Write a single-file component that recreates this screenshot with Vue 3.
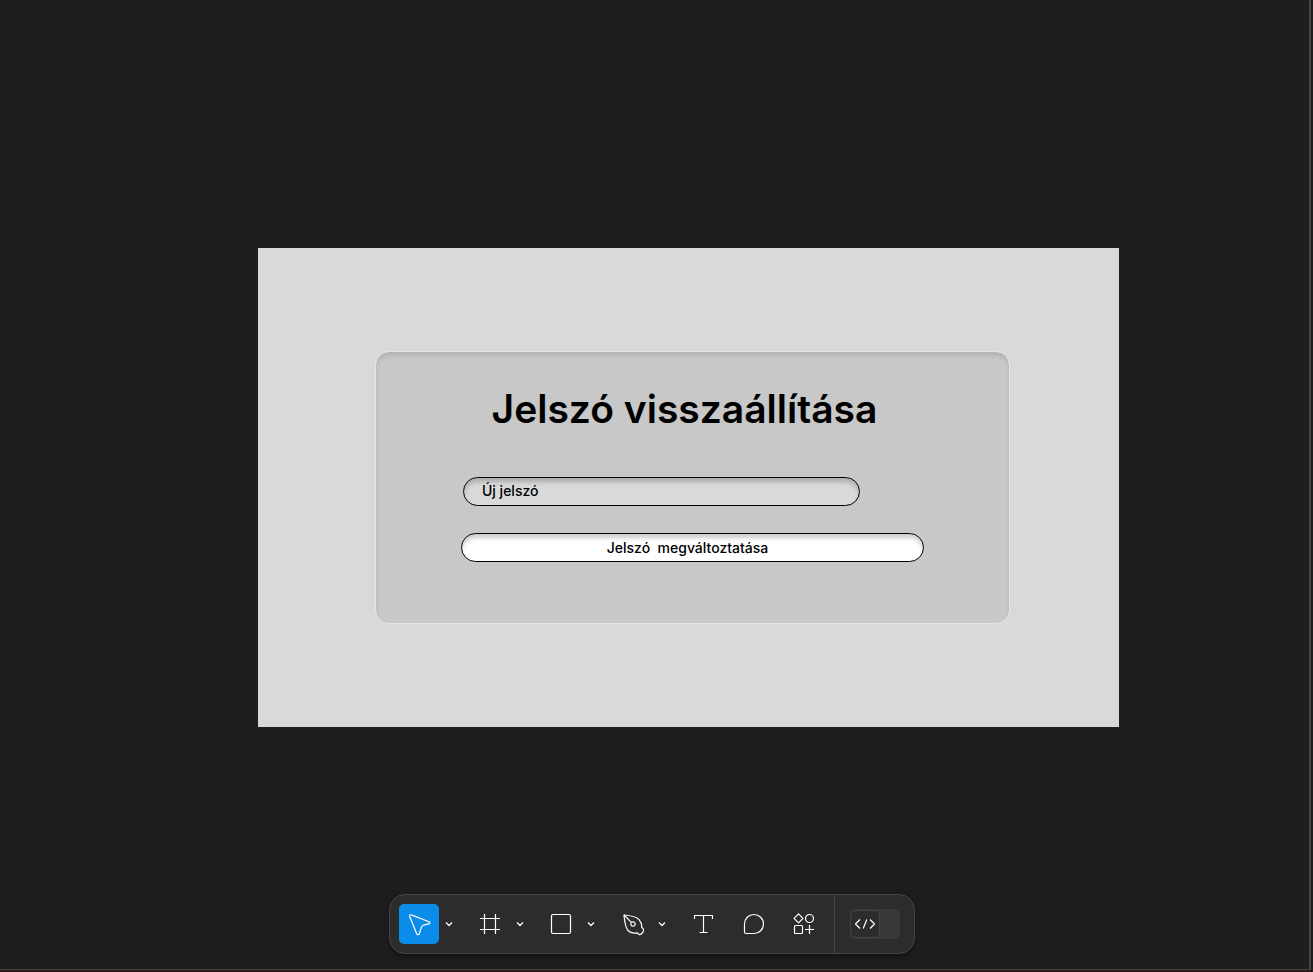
<script setup>
import { ref } from 'vue'

const password = ref('')
const devMode = ref(false)
const active = ref('move')

const tools = [
  {
    id: 'move',
    label: 'Move',
    menu: true,
    paths: ['M2.7 4.5C2.3 3.3 3.2 2.4 4.4 2.9L21.9 9.7C23.2 10.3 23 11.5 21.8 11.8L16.5 13.2C15.5 13.5 14.8 14.1 14.4 15.1L12.3 21.8C11.9 22.9 10.2 22.9 9.7 21.8Z'],
  },
  { id: 'frame', label: 'Frame', menu: true, paths: ['M6.5 2V22M17.5 2V22M2 6.5H22M2 17.5H22'] },
  {
    id: 'shape',
    label: 'Rectangle',
    menu: true,
    paths: ['M4 2.5H20Q21.5 2.5 21.5 4V20Q21.5 21.5 20 21.5H4Q2.5 21.5 2.5 20V4Q2.5 2.5 4 2.5Z'],
  },
  {
    id: 'pen',
    label: 'Pen',
    menu: true,
    paths: [
      'M4 3C9.5 3.4 16.4 4.6 19 7.6C21.2 10.2 22.1 12.8 21.7 15.4L23.7 17.3C23.7 19.9 21.8 22.4 19.4 22.7L17 20.8C13.5 21.4 10 20.8 8 18.5C5 15 4.5 9 4 3Z',
      'M4 3L11.4 10.4',
      'M15.2 12A2.2 2.2 0 1 1 10.8 12A2.2 2.2 0 1 1 15.2 12Z',
    ],
  },
  { id: 'text', label: 'Text', paths: ['M3.5 7V3.5H21.5V7M12.5 3.5V20.5M8.5 20.5H16.5'] },
  { id: 'comment', label: 'Comment', paths: ['M12 2.5A9.5 9.5 0 1 1 12 21.5H4Q2.5 21.5 2.5 20V12A9.5 9.5 0 0 1 12 2.5Z'] },
  {
    id: 'actions',
    label: 'Actions',
    paths: [
      'M5.5 1.8L10 6.3L5.5 10.8L1 6.3Z',
      'M20.5 6.5A4 4 0 1 1 12.5 6.5A4 4 0 1 1 20.5 6.5Z',
      'M2.5 13.5H8.5Q9.5 13.5 9.5 14.5V20.5Q9.5 21.5 8.5 21.5H2.5Q1.5 21.5 1.5 20.5V14.5Q1.5 13.5 2.5 13.5Z',
      'M16.5 13V22M12 17.5H21',
    ],
  },
]
</script>

<template>
  <div class="editor">
    <main class="canvas">
      <section class="frame">
        <form class="card" @submit.prevent>
          <h1>Jelszó visszaállítása</h1>
          <input v-model="password" class="field" type="password" placeholder="Új jelszó" aria-label="Új jelszó" />
          <button class="submit" type="submit">Jelszó&nbsp; megváltoztatása</button>
        </form>
      </section>
    </main>
    <nav class="toolbar" aria-label="Tools">
      <div v-for="tool in tools" :key="tool.id" class="group">
        <button
          type="button"
          class="tool"
          :class="{ active: active === tool.id }"
          :aria-label="tool.label"
          @click="active = tool.id"
        >
          <svg viewBox="0 0 24 24" class="icon"><path v-for="d in tool.paths" :key="d" :d="d" /></svg>
        </button>
        <button v-if="tool.menu" type="button" class="more" :aria-label="tool.label + ' options'">
          <svg viewBox="0 0 8 8" class="chevron"><path d="M1 2.5L4 5.5L7 2.5" /></svg>
        </button>
      </div>
      <label class="mode">
        <input v-model="devMode" type="checkbox" aria-label="Dev Mode" />
        <span class="thumb">
          <svg viewBox="0 0 24 24" class="icon"><path d="M7 7.5L2.5 12L7 16.5M17 7.5L21.5 12L17 16.5M13.8 7.5L10.2 16.5" /></svg>
        </span>
      </label>
    </nav>
  </div>
</template>

<style>
body {
  margin: 0;
  background: #1e1e1e;
}
</style>

<style scoped>
.editor {
  position: relative;
  box-sizing: border-box;
  min-height: 100vh;
  display: flex;
  background: #1e1e1e;
  border-bottom: 2px solid #2c1a1c;
  font-family: Inter, "Open Sans", sans-serif;
}
.canvas {
  flex: 1;
  box-sizing: border-box;
  display: flex;
  align-items: center;
  justify-content: center;
  padding: 6px 0 0 68px;
  border-right: 2px solid #444;
  border-bottom: 1px solid #444;
  margin-right: 2px;
}
.frame {
  box-sizing: border-box;
  width: 861px;
  max-width: 100%;
  padding: 103px 109px 103px 117px;
  background: #d9d9d9;
}
.card {
  display: flex;
  flex-direction: column;
  align-items: flex-start;
  box-sizing: border-box;
  padding: 32px 85px 61px;
  background: #c8c8c8;
  border: 1px solid #e6e6e6;
  border-radius: 14px;
  box-shadow: inset 0 4px 4px rgba(0, 0, 0, 0.1);
}
h1 {
  align-self: stretch;
  margin: 0 16px 43px 0;
  font-size: 39px;
  line-height: 50px;
  font-weight: 600;
  color: #000;
  text-align: center;
  white-space: nowrap;
}
.field,
.submit {
  box-sizing: border-box;
  height: 29px;
  border: 1px solid #000;
  border-radius: 15px;
  font-family: inherit;
  font-size: 14px;
  line-height: 20px;
  font-weight: 500;
  color: #000;
  box-shadow: inset 0 4px 4px rgba(0, 0, 0, 0.2);
}
.field {
  width: 397px;
  max-width: 100%;
  margin: 0 0 27px 2px;
  padding: 0 18px 2px;
  background: #d9d9d9;
}
.field::placeholder {
  color: #000;
  opacity: 1;
}
.submit {
  width: 463px;
  max-width: 100%;
  padding: 0 10px 0 0;
  background: #fff;
}
.toolbar {
  position: absolute;
  left: 0;
  right: 9px;
  bottom: 16px;
  width: fit-content;
  margin: 0 auto;
  display: flex;
  gap: 11px;
  box-sizing: border-box;
  height: 60px;
  padding-left: 9px;
  background: #2c2c2c;
  border: 1px solid #444;
  border-radius: 16px;
  box-shadow: 0 3px 8px rgba(0, 0, 0, 0.35);
}
.group {
  display: flex;
  align-items: center;
}
.tool,
.more {
  display: flex;
  align-items: center;
  justify-content: center;
  width: 40px;
  height: 40px;
  padding: 0;
  border: 0;
  border-radius: 5px;
  background: none;
}
.more {
  width: 20px;
}
.tool.active {
  background: #0c8ce9;
}
.icon,
.chevron {
  width: 24px;
  height: 24px;
  flex: none;
  fill: none;
  stroke: #fff;
  stroke-width: 1.2;
  stroke-linejoin: round;
}
.chevron {
  width: 8px;
  height: 8px;
}
.mode {
  display: flex;
  align-items: center;
  margin-left: -2px;
  padding: 0 14px 0 15px;
  border-left: 1px solid #444;
}
.mode input {
  appearance: none;
  width: 50px;
  height: 30px;
  margin: 0 -50px 0 0;
  border-radius: 6px;
  background: #383838;
}
.thumb {
  display: flex;
  align-items: center;
  justify-content: center;
  box-sizing: border-box;
  width: 30px;
  height: 28px;
  margin: 0 20px 0 0;
  border: 1px solid #444;
  border-radius: 6px;
  background: #2c2c2c;
  z-index: 1;
}
</style>
